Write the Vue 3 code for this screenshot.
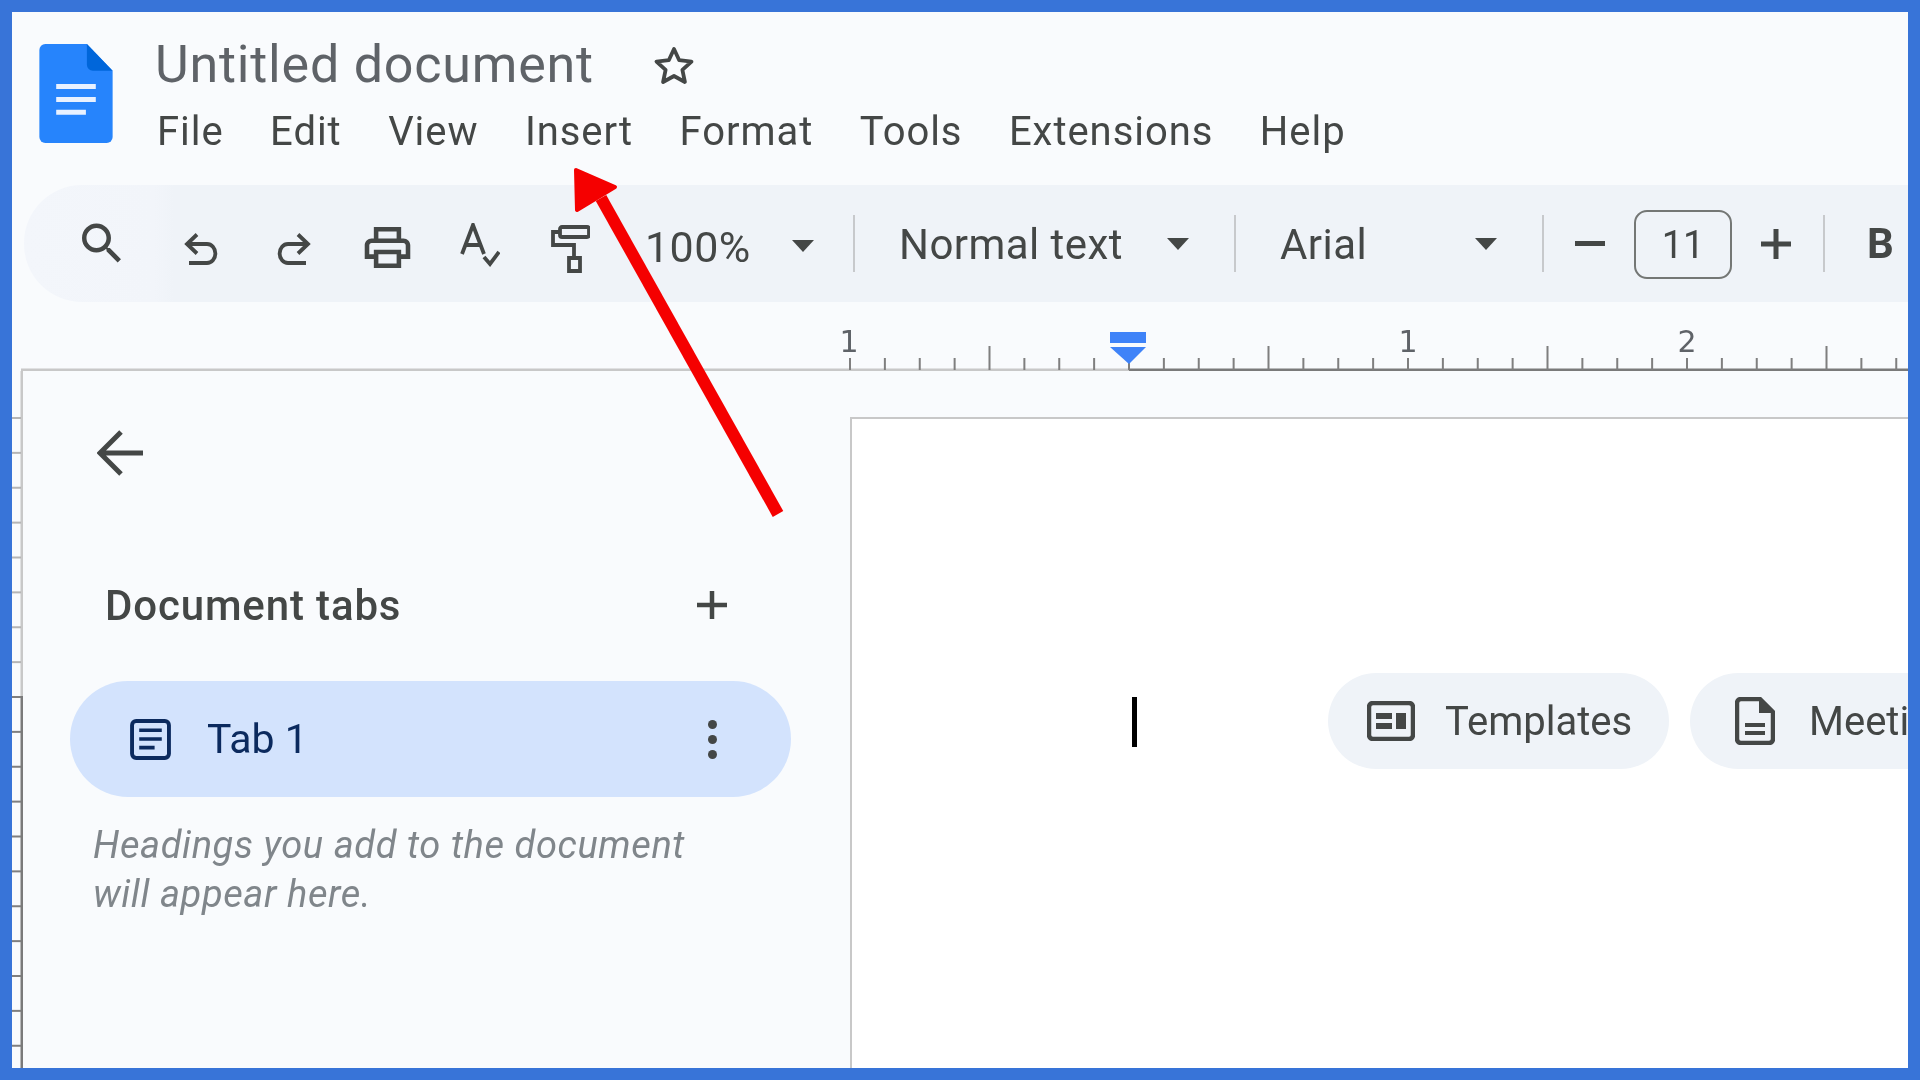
<script setup>
const menu = ['File', 'Edit', 'View', 'Insert', 'Format', 'Tools', 'Extensions', 'Help']
const hTicks = []
for (let k = -8; k <= 22; k++) {
  hTicks.push({ x: 1129 + k * 34.875 - 12, tall: k % 4 === 0 && k % 8 !== 0 })
}
const vTicks = []
for (let k = 0; k <= 18; k++) {
  const y = 46 + k * 34.875
  vTicks.push({ y, dark: y >= 325 })
}
</script>

<template>
  <div class="frame">
    <div class="screen">
      <header class="top">
        <svg class="logo" viewBox="0 0 74 100">
          <path fill="#2684fc" d="M6 0H48L74 27V94a6 6 0 0 1-6 6H6a6 6 0 0 1-6-6V6a6 6 0 0 1 6-6z" />
          <path fill="#0066da" d="M48 0L74 27H54a6 6 0 0 1-6-6z" />
          <path stroke="#e8f1ff" stroke-width="5" d="M17 43H57M17 56H57M17 69H47" />
        </svg>
        <div class="title-block">
          <div class="title-row">
            <span class="title">Untitled document</span>
            <svg class="star" viewBox="0 0 42 40">
              <path fill="none" stroke="#444746" stroke-width="3.800" stroke-linejoin="round" d="M21 4l5.200 11.200 12.300 1.400-9.100 8.300 2.500 12.100L21 31l-10.900 6 2.500-12.100-9.100-8.300 12.300-1.400z" />
            </svg>
          </div>
          <nav class="menu">
            <span v-for="m in menu" :key="m">{{ m }}</span>
          </nav>
        </div>
      </header>

      <div class="toolbar">
        <svg class="ic i-search" viewBox="3 3 17.500 17.500"><path fill="#444746" d="M15.500 14h-.79l-.28-.27A6.471 6.471 0 0 0 16 9.500 6.500 6.500 0 1 0 9.500 16c1.610 0 3.090-.59 4.230-1.570l.27.28v.79l5 4.990L20.490 19l-4.990-5zm-6 0C7.010 14 5 11.990 5 9.500S7.010 5 9.500 5 14 7.010 14 9.500 11.990 14 9.500 14z" /></svg>
        <svg class="ic i-undo" viewBox="0 0 35 32"><path fill="none" stroke="#444746" stroke-width="3.800" d="M13 1.500L3 11l10 9.500M3 11H23a7.500 8.500 0 0 1 0 19H5" /></svg>
        <svg class="ic i-redo" viewBox="0 0 35 32"><path fill="none" stroke="#444746" stroke-width="3.800" d="M22 1.500L32 11l-10 9.500M32 11H12a7.500 8.500 0 0 0 0 19H30" /></svg>
        <svg class="ic i-print" viewBox="2 3 20 18"><path fill="#444746" d="M19 8h-1V3H6v5H5c-1.660 0-3 1.340-3 3v6h4v4h12v-4h4v-6c0-1.660-1.340-3-3-3zM8 5h8v3H8V5zm8 12v2H8v-4h8v2zm2-2v-2H6v2H4v-4c0-.55.45-1 1-1h14c.55 0 1 .45 1 1v4h-2z" /></svg>
        <svg class="ic i-spell" viewBox="0 0 40 44"><path fill="none" stroke="#444746" stroke-width="3.800" d="M2 31L13 2L24 31M6 22H20M24 34L30 41L39 29" /></svg>
        <svg class="ic i-paint" viewBox="0 0 40 48"><path fill="none" stroke="#444746" stroke-width="3.800" d="M12 2H37a2 2 0 0 1 2 2V10a2 2 0 0 1-2 2H12a2 2 0 0 1-2-2V4a2 2 0 0 1 2-2zM10 7H3V20H24V33M19 33H30V46H19z" /></svg>
        <span class="tb-text t-zoom">100%</span>
        <i class="caret c-zoom"></i>
        <i class="sep s1"></i>
        <span class="tb-text t-style">Normal text</span>
        <i class="caret c-style"></i>
        <i class="sep s2"></i>
        <span class="tb-text t-font">Arial</span>
        <i class="caret c-font"></i>
        <i class="sep s3"></i>
        <svg class="ic i-minus" viewBox="0 0 30 5"><rect width="30" height="5" fill="#444746" /></svg>
        <span class="size-box">11</span>
        <svg class="ic i-plus" viewBox="0 0 30 30"><path stroke="#444746" stroke-width="5" d="M0 15H30M15 0V30" /></svg>
        <i class="sep s4"></i>
        <b class="bold">B</b>
      </div>

      <svg class="ruler" width="1896" height="69" viewBox="0 0 1896 69">
        <rect x="9" y="66.500" width="1108" height="2.500" fill="#c8c8c8" />
        <rect x="1117" y="66.500" width="779" height="2.500" fill="#7a7a7a" />
        <rect v-for="(t, i) in hTicks" :key="i" :x="t.x - 1" :y="t.tall ? 44 : 56" width="2" :height="t.tall ? 24 : 12" fill="#7f7f7f" />
        <text class="rnum" x="837" y="50">1</text>
        <text class="rnum" x="1396" y="50">1</text>
        <text class="rnum" x="1675" y="50">2</text>
        <rect x="1098" y="30" width="36" height="11" fill="#3f83f8" />
        <path d="M1098 45H1134L1117 62z" fill="#3f83f8" />
      </svg>

      <div class="main">
        <svg class="vruler" width="11" height="698" viewBox="0 0 11 698">
          <rect x="8.500" y="0" width="2.500" height="325" fill="#c8c8c8" />
          <rect x="8.500" y="325" width="2.500" height="373" fill="#7a7a7a" />
          <rect v-for="(t, i) in vTicks" :key="i" x="0" :y="t.y" width="9" height="2" :fill="t.dark ? '#7f7f7f' : '#b5b5b5'" />
        </svg>

        <aside class="side">
          <svg class="back" viewBox="0 0 46 46"><path fill="none" stroke="#444746" stroke-width="5" d="M24 2L3 23L24 44M3 23H46" /></svg>
          <div class="side-head">
            <span>Document tabs</span>
            <svg class="add" viewBox="0 0 30 28"><path stroke="#444746" stroke-width="4.500" d="M0 14H30M15 0V28" /></svg>
          </div>
          <div class="pill">
            <svg class="tab-ic" viewBox="0 0 40 40">
              <rect x="2" y="2" width="36" height="36" rx="4" fill="none" stroke="#0b2a5e" stroke-width="3.800" />
              <path stroke="#0b2a5e" stroke-width="3.600" d="M9 11H31M9 19.500H31M9 28H24" />
            </svg>
            <span class="tab-name">Tab 1</span>
            <div class="dots"><i></i><i></i><i></i></div>
          </div>
          <p class="hint">Headings you add to the document<br />will appear here.</p>
        </aside>

        <section class="page">
          <i class="cursor"></i>
          <div class="chip chip-a">
            <svg class="chip-ic1" viewBox="0 0 48 40">
              <rect x="2" y="2" width="44" height="36" rx="4" fill="none" stroke="#444746" stroke-width="4.500" />
              <path fill="#444746" d="M9 12H25V18H9zM9 22H25V28H9zM29 12H39V28H29z" />
            </svg>
            <span>Templates</span>
          </div>
          <div class="chip chip-b">
            <svg class="chip-ic2" viewBox="0 0 40 48">
              <path fill="none" stroke="#444746" stroke-width="4.500" stroke-linejoin="round" d="M6 2H25L38 15V42a4 4 0 0 1-4 4H6a4 4 0 0 1-4-4V6a4 4 0 0 1 4-4z" />
              <path fill="#444746" d="M24 2L38 16H24z" />
              <path stroke="#444746" stroke-width="4" d="M10 28H30M10 36H30" />
            </svg>
            <span>Meeting notes</span>
          </div>
        </section>
      </div>
    </div>

    <svg class="arrow" width="1920" height="1080" viewBox="0 0 1920 1080">
      <path d="M778 514L601 198" stroke="#f50000" stroke-width="12" fill="none" />
      <path d="M576 170L615 187L577 210z" fill="#f50000" stroke="#f50000" stroke-width="4" stroke-linejoin="round" />
    </svg>
  </div>
</template>

<style scoped>
.frame {
  position: relative;
  width: 1920px;
  height: 1080px;
  overflow: hidden;
  font-family: Roboto, "Liberation Sans", sans-serif;
  filter: blur(0.7px);
}
.screen {
  box-sizing: border-box;
  width: 100%;
  height: 100%;
  border: 12px solid #3874d8;
  background: #f9fbfd;
  display: flex;
  flex-direction: column;
  overflow: hidden;
}
.top {
  display: flex;
  height: 173px;
  flex: none;
}
.logo {
  width: 74px;
  height: 99px;
  margin: 32px 0 0 27px;
}
.title-block {
  margin-left: 42px;
  padding-top: 23px;
}
.title-row {
  display: flex;
  align-items: center;
  height: 60px;
}
.title {
  font-size: 52px;
  line-height: 60px;
  color: #5f6368;
  letter-spacing: 0.8px;
}
.star {
  width: 42px;
  height: 40px;
  margin-left: 59px;
  margin-top: 0;
}
.menu {
  display: flex;
  gap: 46.500px;
  margin-top: 12px;
  padding-left: 2px;
  font-size: 40px;
  letter-spacing: 0.95px;
  line-height: 50px;
  color: #444746;
}
.toolbar {
  flex: none;
  display: flex;
  align-items: center;
  height: 117px;
  margin-left: 12px;
  padding-left: 58px;
  border-radius: 58px 0 0 58px;
  background: linear-gradient(90deg, #f3f6fb 0, #f2f5fa 130px, #eff3f8 150px);
  overflow: hidden;
  color: #444746;
}
.ic { flex: none; }
.i-search { width: 39px; height: 40px; margin-top: -1px; }
.i-undo { width: 35px; height: 32px; margin-left: 63px; margin-top: 11px; }
.i-redo { width: 35px; height: 32px; margin-left: 57px; margin-top: 11px; }
.i-print { width: 47px; height: 41px; margin-left: 53px; margin-top: 8px; }
.i-spell { width: 40px; height: 44px; margin-left: 49px; margin-top: 3px; }
.i-paint { width: 40px; height: 48px; margin-left: 50px; margin-top: 11px; }
.tb-text {
  flex: none;
  font-size: 42px;
  letter-spacing: 0.45px;
  line-height: 50px;
  color: #444746;
  margin-top: 2px;
}
.t-zoom { margin-left: 55px; margin-top: 6px; width: 107px; white-space: nowrap; font-size: 43px; }
.caret {
  flex: none;
  width: 0;
  height: 0;
  border-left: 11px solid transparent;
  border-right: 11px solid transparent;
  border-top: 12px solid #444746;
}
.c-zoom { margin-left: 40px; margin-top: 4px; }
.sep {
  flex: none;
  width: 2px;
  height: 57px;
  background: #c7c9cc;
}
.s1 { margin-left: 39px; }
.t-style { margin-left: 44px; width: 222px; white-space: nowrap; }
.c-style { margin-left: 46px; }
.s2 { margin-left: 45px; }
.t-font { margin-left: 44px; width: 85px; }
.c-font { margin-left: 110px; }
.s3 { margin-left: 45px; }
.i-minus { width: 30px; height: 5px; margin-left: 31px; }
.size-box {
  flex: none;
  box-sizing: border-box;
  width: 98px;
  height: 69px;
  margin: 1px 0 0 29px;
  border: 2.500px solid #747775;
  border-radius: 13px;
  text-align: center;
  font-size: 38px;
  line-height: 66px;
  color: #444746;
}
.i-plus { width: 30px; height: 30px; margin-left: 29px; }
.s4 { margin-left: 32px; }
.bold {
  flex: none;
  margin-left: 42px;
  font-size: 42px;
  line-height: 50px;
  font-weight: 700;
  color: #444746;
}
.ruler {
  flex: none;
  display: block;
}
.rnum {
  font-family: "DejaVu Sans", sans-serif;
  font-size: 30px;
  fill: #5f6368;
  text-anchor: middle;
}
.main {
  flex: 1;
  min-height: 0;
  display: flex;
}
.vruler {
  flex: none;
  display: block;
}
.side {
  flex: none;
  width: 827px;
  box-sizing: border-box;
  padding: 59px 0 0 86px;
}
.back {
  display: block;
  width: 46px;
  height: 46px;
  margin-left: -12px;
}
.side-head {
  display: flex;
  align-items: center;
  justify-content: space-between;
  width: 622px;
  margin: 104px 0 0 -4px;
  height: 50px;
  font-size: 42px;
  letter-spacing: 0.85px;
  font-weight: 500;
  color: #444746;
}
.add {
  width: 30px;
  height: 28px;
}
.pill {
  display: flex;
  align-items: center;
  width: 721px;
  height: 116px;
  margin: 51px 0 0 -39px;
  padding: 0 74px 0 60px;
  box-sizing: border-box;
  border-radius: 58px;
  background: #d3e3fd;
}
.tab-ic {
  flex: none;
  width: 41px;
  height: 41px;
}
.tab-name {
  flex: 1;
  margin-left: 36px;
  font-size: 41px;
  color: #0b2a5e;
}
.dots {
  display: flex;
  flex-direction: column;
  gap: 6px;
}
.dots i {
  display: block;
  width: 9px;
  height: 9px;
  border-radius: 50%;
  background: #444746;
}
.hint {
  margin: 24px 0 0 -16px;
  font-size: 38px;
  letter-spacing: 0.6px;
  line-height: 49px;
  font-style: italic;
  color: #80868b;
}
.page {
  flex: 1;
  min-width: 0;
  margin-top: 46px;
  box-sizing: border-box;
  border-top: 2.500px solid #c8c8c8;
  border-left: 2.500px solid #c8c8c8;
  background: #fff;
  display: flex;
  align-items: flex-start;
  overflow: hidden;
  padding-top: 254px;
}
.cursor {
  flex: none;
  width: 5px;
  height: 50px;
  margin: 24px 0 0 280px;
  background: #000;
}
.chip {
  flex: none;
  display: flex;
  align-items: center;
  height: 96px;
  border-radius: 48px;
  background: #eff3f8;
  font-size: 40px;
  color: #444746;
  white-space: nowrap;
}
.chip-a {
  margin-left: 191px;
  width: 341px;
  padding-left: 39px;
  box-sizing: border-box;
}
.chip-b {
  margin-left: 21px;
  padding: 0 40px 0 45px;
}
.chip-ic1 { width: 48px; height: 40px; margin-right: 30px; }
.chip-ic2 { width: 40px; height: 48px; margin-right: 34px; }
.arrow {
  position: absolute;
  left: 0;
  top: 0;
  pointer-events: none;
}
</style>
